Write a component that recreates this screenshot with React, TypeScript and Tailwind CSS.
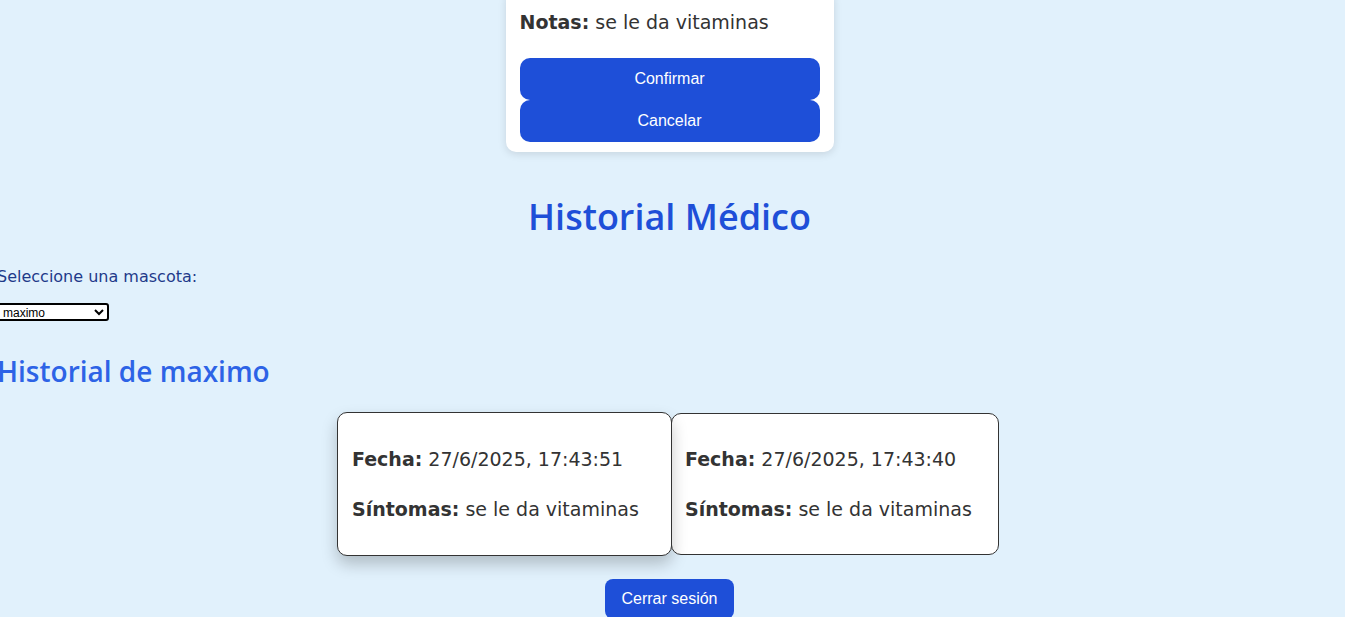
import React from "react";

const body = { fontFamily: "'DejaVu Sans', 'Noto Sans', sans-serif" };
const arial = { fontFamily: "'Liberation Sans', Arial, sans-serif" };

export default function App() {
  return (
    <div
      className="h-[617px] w-full overflow-hidden bg-[#e1f1fc] text-[#2b2b2b]"
      style={{ fontFamily: "'Open Sans', 'Noto Sans', sans-serif" }}
    >
      <div className="w-[1339px]">
        {/* Confirm card */}
        <div className="mx-auto mt-[-10px] w-[328px] rounded-[10px] bg-white px-[14px] pb-[10px] pt-[18px] shadow-[0_2px_8px_rgba(0,0,0,0.12)]">
          <p className="text-[19px] leading-[28px] text-[#333]" style={body}>
            <span className="font-semibold">Notas:</span> se le da vitaminas
          </p>
          <div className="mt-[22px] flex flex-col">
            <button className="h-[42px] w-full rounded-[10px] bg-[#1e4fd8] text-[16px] text-white" style={arial}>
              Confirmar
            </button>
            <button className="h-[42px] w-full rounded-[10px] bg-[#1e4fd8] text-[16px] text-white" style={arial}>
              Cancelar
            </button>
          </div>
        </div>

        <h1 className="mt-[43px] text-center text-[36px] font-semibold leading-[44px] text-[#1e4fd8]">
          Historial Médico
        </h1>

        <div className="ml-[-3px]">
          <label className="mt-[26px] block text-[16px] leading-[24px] text-[#1e3a8a]" style={body}>
            Seleccione una mascota:
          </label>
          <select
            className="mt-[14px] block h-[18px] w-[112px] rounded-[3px] border-2 border-black bg-white text-[12px] leading-[14px] text-black"
            style={arial}
            defaultValue="maximo"
          >
            <option value="maximo">maximo</option>
          </select>
          <h2 className="mt-[32px] text-[28px] font-semibold leading-[36px] text-[#2d63e6]">
            Historial de maximo
          </h2>
        </div>

        <div className="mt-[24px] flex justify-center pr-[3px]">
          <div className="relative z-10 mr-[-1px] mt-[-1px] flex h-[144px] w-[335px] flex-col justify-center gap-[24px] rounded-[10px] border border-[#333] bg-white px-[14px] shadow-[0_8px_16px_rgba(0,0,0,0.22)]">
            <p className="text-[19px] leading-[26px] text-[#333]" style={body}>
              <span className="font-semibold">Fecha:</span> 27/6/2025, 17:43:51
            </p>
            <p className="text-[19px] leading-[26px] text-[#333]" style={body}>
              <span className="font-semibold">Síntomas:</span> se le da vitaminas
            </p>
          </div>
          <div className="flex h-[142px] w-[328px] flex-col justify-center gap-[24px] rounded-[10px] border border-[#333] bg-white px-[13px]">
            <p className="text-[19px] leading-[26px] text-[#333]" style={body}>
              <span className="font-semibold">Fecha:</span> 27/6/2025, 17:43:40
            </p>
            <p className="text-[19px] leading-[26px] text-[#333]" style={body}>
              <span className="font-semibold">Síntomas:</span> se le da vitaminas
            </p>
          </div>
        </div>

        <div className="mt-[23px] flex justify-center">
          <button className="h-[40px] rounded-[8px] bg-[#1e4fd8] px-[16px] text-[16px] text-white" style={arial}>
            Cerrar sesión
          </button>
        </div>
      </div>
    </div>
  );
}
